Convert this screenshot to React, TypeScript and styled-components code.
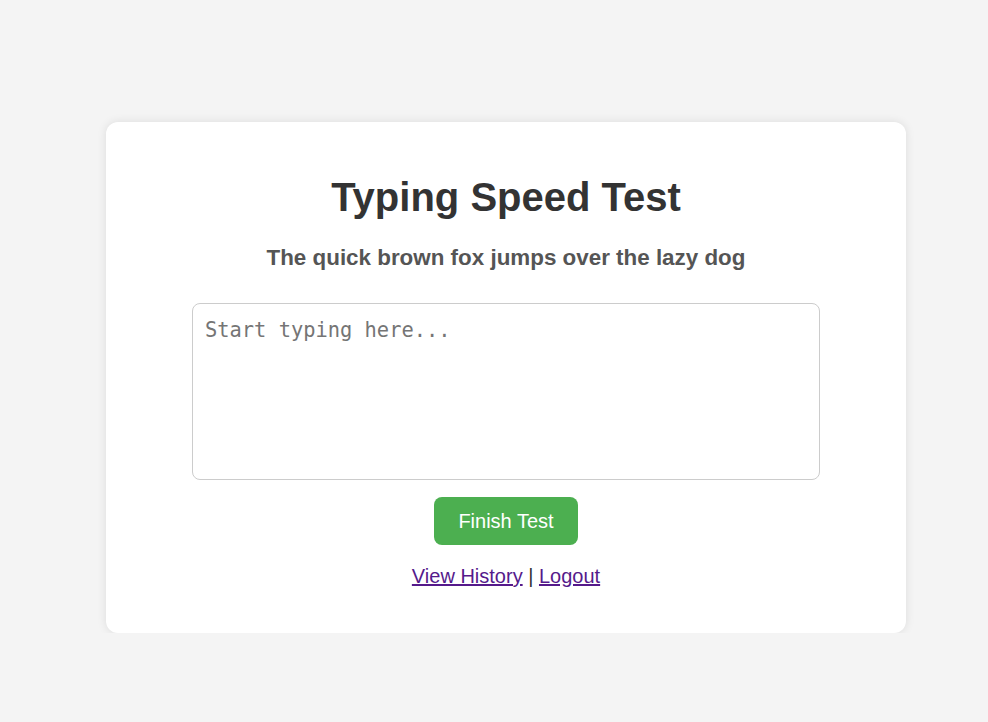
import React from "react";
import styled, { createGlobalStyle } from "styled-components";

const GlobalStyle = createGlobalStyle`
  html, body {
    margin: 0;
    padding: 0;
    background: #f4f4f4;
    font-family: "Liberation Sans", Arial, sans-serif;
  }
`;

const Page = styled.main`
  padding: 122px 0 0 106px;
`;

const Card = styled.section`
  width: 800px;
  box-sizing: border-box;
  background: #ffffff;
  border-radius: 12px;
  box-shadow: 0 0 10px rgba(0, 0, 0, 0.1);
  padding: 52px 0 45px;
  display: flex;
  flex-direction: column;
  align-items: center;
  color: #333;
`;

const Title = styled.h1`
  margin: 0;
  font-size: 40px;
  font-weight: bold;
  color: #333;
  line-height: 46px;
`;

const Sentence = styled.h2`
  margin: 25px 0 0;
  font-size: 22.4px;
  font-weight: bold;
  color: #555;
  line-height: 26px;
`;

const Input = styled.textarea`
  display: block;
  box-sizing: border-box;
  width: 628px;
  height: 177px;
  margin-top: 32px;
  padding: 14px 12px;
  border: 1px solid #ccc;
  border-radius: 8px;
  font-family: "DejaVu Sans Mono", monospace;
  font-size: 20.4px;
  resize: none;
  outline: none;
  color: #333;

  &::placeholder {
    color: #757575;
  }
`;

const FinishButton = styled.button`
  margin-top: 17px;
  padding: 12px 24px;
  border: none;
  border-radius: 8px;
  background: #4caf50;
  color: #ffffff;
  font-family: "Liberation Sans", Arial, sans-serif;
  font-size: 20px;
  line-height: 24px;
  cursor: pointer;
`;

const Links = styled.p`
  margin: 20px 0 0;
  font-size: 20px;
  line-height: 23px;
  color: #333;
`;

const NavLink = styled.a`
  color: #551a8b;
  text-decoration: underline;
`;

export default function App() {
  return (
    <>
      <GlobalStyle />
      <Page>
        <Card>
          <Title>Typing Speed Test</Title>
          <Sentence>The quick brown fox jumps over the lazy dog</Sentence>
          <Input placeholder="Start typing here..." />
          <FinishButton>Finish Test</FinishButton>
          <Links>
            <NavLink href="#history">View History</NavLink> |{" "}
            <NavLink href="#logout">Logout</NavLink>
          </Links>
        </Card>
      </Page>
    </>
  );
}
